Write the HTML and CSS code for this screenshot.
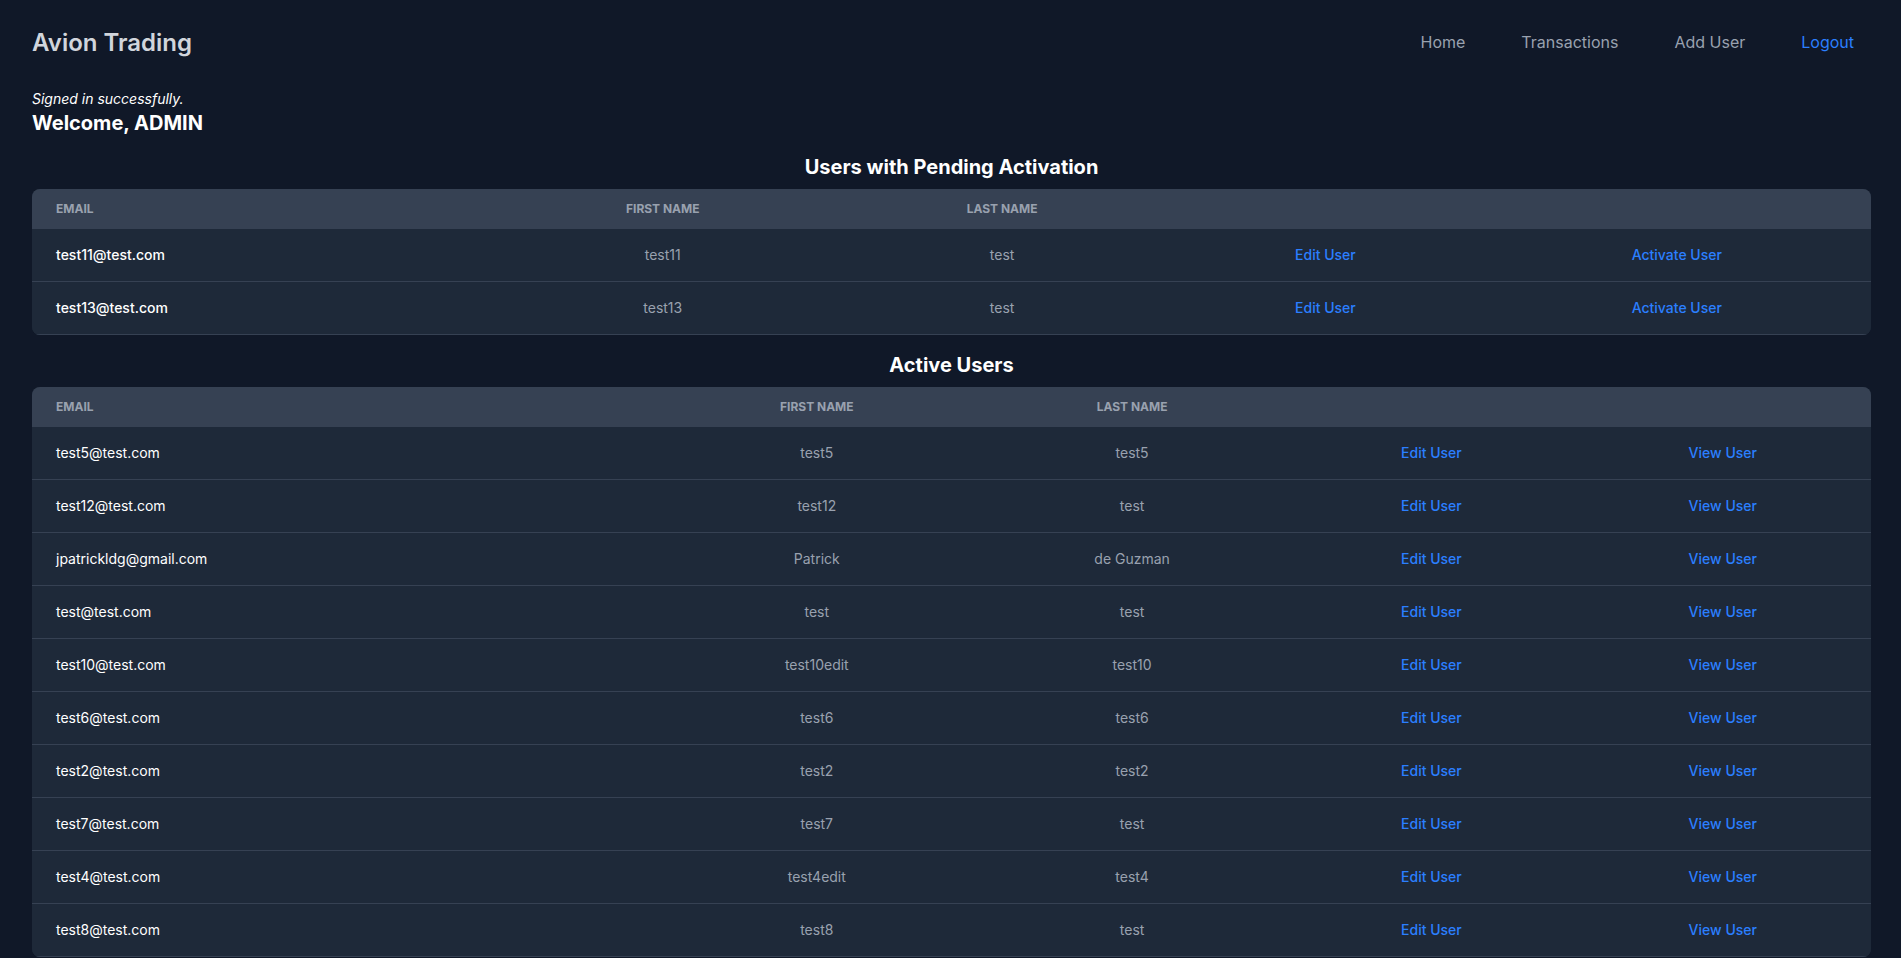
FILE: index.html
```html
<!DOCTYPE html>
<html lang="en">
<head>
<meta charset="utf-8">
<title>Avion Trading</title>
<link rel="stylesheet" href="styles.css">
</head>
<body>
<header class="topbar">
  <a class="brand" href="#">Avion Trading</a>
  <nav class="nav">
    <a class="nav-link" href="#">Home</a>
    <a class="nav-link" href="#">Transactions</a>
    <a class="nav-link" href="#">Add User</a>
    <a class="nav-link nav-logout" href="#">Logout</a>
  </nav>
</header>
<main class="main">
  <p class="notice">Signed in successfully.</p>
  <h1 class="welcome">Welcome, ADMIN</h1>

  <h2 class="section-title">Users with Pending Activation</h2>
  <div class="table-wrap">
    <table class="users pending">
      <thead>
        <tr>
          <th class="c-email">Email</th>
          <th class="c-first">First Name</th>
          <th class="c-last">Last Name</th>
          <th class="c-a1"></th>
          <th class="c-a2"></th>
        </tr>
      </thead>
      <tbody>
        <tr><th class="email strong" scope="row">test11@test.com</th><td>test11</td><td>test</td><td><a class="link" href="#">Edit User</a></td><td><a class="link" href="#">Activate User</a></td></tr>
        <tr><th class="email strong" scope="row">test13@test.com</th><td>test13</td><td>test</td><td><a class="link" href="#">Edit User</a></td><td><a class="link" href="#">Activate User</a></td></tr>
      </tbody>
    </table>
  </div>

  <h2 class="section-title">Active Users</h2>
  <div class="table-wrap">
    <table class="users active">
      <thead>
        <tr>
          <th class="c-email">Email</th>
          <th class="c-first">First Name</th>
          <th class="c-last">Last Name</th>
          <th class="c-a1"></th>
          <th class="c-a2"></th>
        </tr>
      </thead>
      <tbody>
        <tr><td class="email">test5@test.com</td><td>test5</td><td>test5</td><td><a class="link" href="#">Edit User</a></td><td><a class="link" href="#">View User</a></td></tr>
        <tr><td class="email">test12@test.com</td><td>test12</td><td>test</td><td><a class="link" href="#">Edit User</a></td><td><a class="link" href="#">View User</a></td></tr>
        <tr><td class="email">jpatrickldg@gmail.com</td><td>Patrick</td><td>de Guzman</td><td><a class="link" href="#">Edit User</a></td><td><a class="link" href="#">View User</a></td></tr>
        <tr><td class="email">test@test.com</td><td>test</td><td>test</td><td><a class="link" href="#">Edit User</a></td><td><a class="link" href="#">View User</a></td></tr>
        <tr><td class="email">test10@test.com</td><td>test10edit</td><td>test10</td><td><a class="link" href="#">Edit User</a></td><td><a class="link" href="#">View User</a></td></tr>
        <tr><td class="email">test6@test.com</td><td>test6</td><td>test6</td><td><a class="link" href="#">Edit User</a></td><td><a class="link" href="#">View User</a></td></tr>
        <tr><td class="email">test2@test.com</td><td>test2</td><td>test2</td><td><a class="link" href="#">Edit User</a></td><td><a class="link" href="#">View User</a></td></tr>
        <tr><td class="email">test7@test.com</td><td>test7</td><td>test</td><td><a class="link" href="#">Edit User</a></td><td><a class="link" href="#">View User</a></td></tr>
        <tr><td class="email">test4@test.com</td><td>test4edit</td><td>test4</td><td><a class="link" href="#">Edit User</a></td><td><a class="link" href="#">View User</a></td></tr>
        <tr><td class="email">test8@test.com</td><td>test8</td><td>test</td><td><a class="link" href="#">Edit User</a></td><td><a class="link" href="#">View User</a></td></tr>
      </tbody>
    </table>
  </div>
</main>
</body>
</html>
```

FILE: styles.css
```css
* { box-sizing: border-box; }

html, body {
  margin: 0;
  padding: 0;
  background: #101828;
  font-family: Inter, "Noto Sans", "Liberation Sans", sans-serif;
  color: #ffffff;
}

a { text-decoration: none; }

.topbar {
  display: flex;
  align-items: center;
  justify-content: space-between;
  padding: 27px 47px 0 32px;
  height: 59px;
}

.brand {
  font-size: 24px;
  line-height: 32px;
  font-weight: 600;
  color: #d1d5dc;
}

.nav {
  display: flex;
  align-items: center;
  gap: 56px;
  margin-top: -2px;
}

.nav-link {
  font-size: 16px;
  line-height: 24px;
  color: #99a1af;
}

.nav-logout {
  color: #2b7fff;
}

.main {
  padding: 30px 30px 0 32px;
}

.notice {
  margin: 0;
  font-size: 14px;
  line-height: 20px;
  font-style: italic;
  color: #ffffff;
}

.welcome {
  margin: 0;
  font-size: 20px;
  line-height: 28px;
  font-weight: 700;
  color: #ffffff;
}

.section-title {
  margin: 16px 0 8px 0;
  text-align: center;
  font-size: 20px;
  line-height: 28px;
  font-weight: 700;
  color: #ffffff;
}

.table-wrap {
  border-radius: 8px;
  overflow: hidden;
  background: #1e2939;
}

.users {
  width: 100%;
  border-collapse: collapse;
  table-layout: fixed;
  font-size: 14px;
  line-height: 20px;
}

.users thead th {
  background: #364153;
  color: #99a1af;
  font-size: 12px;
  line-height: 16px;
  font-weight: 700;
  text-transform: uppercase;
  padding: 12px 24px;
  text-align: center;
}

.users thead th.c-email { text-align: left; }

.users tbody tr {
  background: #1e2939;
  border-bottom: 1px solid #364153;
}

.users tbody td,
.users tbody th {
  padding: 16px 24px;
  text-align: center;
  color: #99a1af;
  font-weight: 400;
  white-space: nowrap;
}

.users tbody .email {
  text-align: left;
  color: #ffffff;
}

.users tbody .email.strong {
  font-weight: 500;
}

.link {
  color: #2b7fff;
  font-weight: 500;
}

/* pending table column widths */
.pending .c-email { width: 24.88%; }
.pending .c-first { width: 18.84%; }
.pending .c-last  { width: 18.07%; }
.pending .c-a1    { width: 17.09%; }
.pending .c-a2    { width: 21.12%; }

/* active table column widths */
.active .c-email { width: 34.02%; }
.active .c-first { width: 17.31%; }
.active .c-last  { width: 16.98%; }
.active .c-a1    { width: 15.57%; }
.active .c-a2    { width: 16.12%; }
```
